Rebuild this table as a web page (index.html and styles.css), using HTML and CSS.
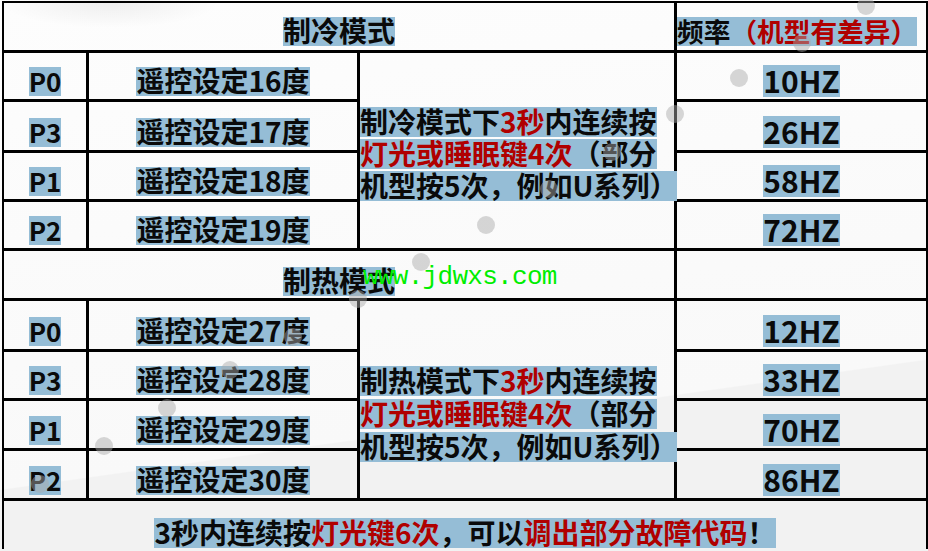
FILE: index.html
```html
<!DOCTYPE html>
<html lang="zh-CN">
<head>
<meta charset="utf-8">
<title>制冷制热模式频率</title>
<link rel="stylesheet" href="styles.css">
</head>
<body>
<div class="sheet">
  <div class="cell span3"><span class="hl">制冷模式</span></div>
  <div class="cell freq last"><span class="hl">频率<em class="r">（机型有差异）</em></span></div>

  <div class="cell p"><span class="hl">P0</span></div>
  <div class="cell"><span class="hl">遥控设定16度</span></div>
  <div class="cell note cool">
    <span class="hl line">制冷模式下<em class="r">3秒</em>内连续按</span>
    <span class="hl line"><em class="r">灯光或睡眠键4次</em>（部分</span>
    <span class="hl line">机型按5次，例如U系列）</span>
  </div>
  <div class="cell hz last"><span class="hl">10HZ</span></div>

  <div class="cell p"><span class="hl">P3</span></div>
  <div class="cell"><span class="hl">遥控设定17度</span></div>
  <div class="cell hz last"><span class="hl">26HZ</span></div>

  <div class="cell p"><span class="hl">P1</span></div>
  <div class="cell"><span class="hl">遥控设定18度</span></div>
  <div class="cell hz last"><span class="hl">58HZ</span></div>

  <div class="cell p"><span class="hl">P2</span></div>
  <div class="cell"><span class="hl">遥控设定19度</span></div>
  <div class="cell hz last"><span class="hl">72HZ</span></div>

  <div class="cell span3 heathead"><span class="hl">制热模式</span></div>
  <div class="cell last"></div>

  <div class="cell p"><span class="hl">P0</span></div>
  <div class="cell"><span class="hl">遥控设定27度</span></div>
  <div class="cell note heat">
    <span class="hl line">制热模式下<em class="r">3秒</em>内连续按</span>
    <span class="hl line"><em class="r">灯光或睡眠键4次</em>（部分</span>
    <span class="hl line">机型按5次，例如U系列）</span>
  </div>
  <div class="cell hz last"><span class="hl">12HZ</span></div>

  <div class="cell p"><span class="hl">P3</span></div>
  <div class="cell"><span class="hl">遥控设定28度</span></div>
  <div class="cell hz last"><span class="hl">33HZ</span></div>

  <div class="cell p"><span class="hl">P1</span></div>
  <div class="cell"><span class="hl">遥控设定29度</span></div>
  <div class="cell hz last"><span class="hl">70HZ</span></div>

  <div class="cell p"><span class="hl">P2</span></div>
  <div class="cell"><span class="hl">遥控设定30度</span></div>
  <div class="cell hz last"><span class="hl">86HZ</span></div>

  <div class="cell full"><span class="hl">3秒内连续按<em class="r">灯光键6次</em>，可以<em class="r">调出部分故障代码</em>！</span></div>
</div>

<div class="dots">
  <i class="dot d1"></i><i class="dot d2"></i><i class="dot d3"></i><i class="dot d4"></i>
  <i class="dot d5"></i><i class="dot d6"></i><i class="dot d7"></i><i class="dot d8"></i>
  <i class="dot d9"></i><i class="dot d10"></i><i class="dot d11"></i><i class="dot d12"></i>
  <i class="dot d13"></i><i class="dot d14"></i>
</div>
<div class="watermark">www.jdwxs.com</div>
</body>
</html>
```
FILE: styles.css
```css
html, body {
  margin: 0;
  height: 100%;
  overflow: hidden;
}

body {
  position: relative;
  font-family: "Noto Sans CJK SC", "Noto Sans", sans-serif;
  font-weight: 700;
  color: #0a0a0a;
  background-color: #f2f2f2;
  background-image:
    radial-gradient(ellipse 110px 26px at 110px 2px, rgba(0, 0, 0, 0.06), rgba(0, 0, 0, 0)),
    linear-gradient(172deg, #fdfdfd 0%, #f9f9f9 71.8%, rgba(249, 249, 249, 0) 72%);
}

.sheet {
  display: grid;
  grid-template-columns: 85px 271px 317px 249px;
  grid-template-rows: 50px 49px 51px 49px 49px 50px 51px 49px 50px 50px 48px;
  width: fit-content;
  margin: 1px 0 0 2px;
  border: 2px solid #000;
  border-bottom: 0;
}

.cell {
  box-sizing: border-box;
  min-width: 0;
  display: flex;
  justify-content: center;
  align-items: flex-end;
  padding-bottom: 3px;
  border-right: 3px solid #000;
  border-bottom: 3px solid #000;
  font-size: 28px;
}

.cell.last {
  border-right: 0;
}

.p {
  font-size: 26px;
}

.span3 {
  grid-column: span 3;
  padding-bottom: 4px;
}

.heathead {
  padding-bottom: 2px;
}

.freq {
  justify-content: flex-start;
  font-size: 26.7px;
  padding-bottom: 4px;
  white-space: nowrap;
}

.hl {
  display: inline-block;
  background: #95bdd6;
  line-height: 27px;
  padding-bottom: 2px;
  white-space: nowrap;
}

.p .hl {
  line-height: 28px;
  padding-bottom: 1px;
}

.hz {
  font-size: 30px;
  padding-bottom: 2px;
}

.hz .hl {
  line-height: 30px;
  padding-bottom: 2px;
}

.r {
  color: #b00000;
  font-style: normal;
}

.note {
  display: block;
  grid-row: span 4;
  padding-top: 54px;
}

.note .line {
  display: block;
  width: fit-content;
  line-height: 28px;
  margin-bottom: 2px;
}

.note.heat {
  padding-top: 65px;
}

.note.heat .line {
  margin-bottom: 3px;
}

.full {
  grid-column: 1 / -1;
  border: 0;
  align-items: flex-start;
  padding: 17px 0 0;
}

.full .hl {
  line-height: 28px;
}

.dots {
  position: absolute;
  inset: 0;
  pointer-events: none;
}

.dot {
  position: absolute;
  width: 18px;
  height: 18px;
  margin: -9px 0 0 -9px;
  border-radius: 50%;
  background: rgba(170, 170, 170, 0.47);
}

.d1 { left: 40px; top: 484px; }
.d2 { left: 104px; top: 446px; }
.d3 { left: 167px; top: 408px; }
.d4 { left: 230px; top: 370px; }
.d5 { left: 293px; top: 337px; }
.d6 { left: 358px; top: 299px; }
.d7 { left: 421px; top: 262px; }
.d8 { left: 486px; top: 225px; }
.d9 { left: 549px; top: 189px; }
.d10 { left: 612px; top: 152px; }
.d11 { left: 675px; top: 114px; }
.d12 { left: 739px; top: 78px; }
.d13 { left: 802px; top: 43px; }
.d14 { left: 866px; top: 6px; }

.watermark {
  position: absolute;
  left: 363px;
  top: 264px;
  font-family: "Liberation Mono", monospace;
  font-weight: 400;
  font-size: 26px;
  line-height: 26px;
  letter-spacing: -0.7px;
  color: #00ee00;
}
```
